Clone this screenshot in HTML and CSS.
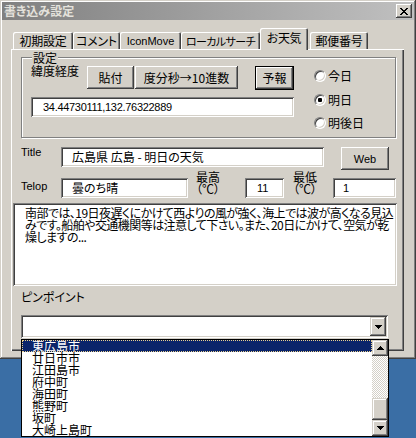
FILE: index.html
```html
<!DOCTYPE html>
<html lang="ja">
<head>
<meta charset="utf-8">
<title>書き込み設定</title>
<link rel="stylesheet" href="styles.css">
</head>
<body>
<div class="window">
  <div class="titlebar">
    <span class="title">書き込み設定</span>
    <span class="close"><svg width="8" height="7" viewBox="0 0 8 7"><path d="M0 0h2v1h-2z M6 0h2v1h-2z M1 1h2v1h-2z M5 1h2v1h-2z M2 2h4v1h-4z M3 3h2v1h-2z M2 4h4v1h-4z M1 5h2v1h-2z M5 5h2v1h-2z M0 6h2v1h-2z M6 6h2v1h-2z" fill="#000"/></svg></span>
  </div>
  <div class="client">
    <div class="tabs">
      <div class="tab t1">初期設定</div>
      <div class="tab t2">コメント</div>
      <div class="tab t3 lt">IconMove</div>
      <div class="tab t4">ローカルサーチ</div>
      <div class="tab sel">お天気</div>
      <div class="tab t6">郵便番号</div>
    </div>
    <div class="page">
      <div class="group">
        <span class="legend">設定</span>
        <div class="gleft">
          <div class="row1">
            <span class="lbl-latlon">緯度経度</span>
            <div class="btn b-paste">貼付</div>
            <div class="btn b-conv">度分秒→10進数</div>
            <div class="btn b-fc">予報</div>
          </div>
          <div class="field f-latlon"><span class="lt num">34.44730111,132.76322889</span></div>
        </div>
        <div class="radios">
          <div class="radio"><span class="rb"></span>今日</div>
          <div class="radio"><span class="rb on"></span>明日</div>
          <div class="radio r3"><span class="rb"></span>明後日</div>
        </div>
      </div>
      <div class="row-title">
        <span class="lbl lt lbl-title">Title</span>
        <div class="field f-title">広島県 広島 - 明日の天気</div>
        <div class="btn b-web lt">Web</div>
      </div>
      <div class="row-telop">
        <span class="lbl lt lbl-telop">Telop</span>
        <div class="field f-telop">曇のち晴</div>
        <span class="temp-lbl tl1">最高
（℃）</span>
        <div class="field f-hi"><span class="lt">11</span></div>
        <span class="temp-lbl tl2">最低
（℃）</span>
        <div class="field f-lo"><span class="lt">1</span></div>
      </div>
      <div class="memo">南部では、19日夜遅くにかけて西よりの風が強く、海上では波が高くなる見込
みです。船舶や交通機関等は注意して下さい。また、20日にかけて、空気が乾
燥しますの...</div>
      <div class="pin-lbl">ピンポイント</div>
      <div class="combo">
        <div class="combo-btn"><svg width="7" height="4" viewBox="0 0 7 4"><path d="M0 0h7v1h-7z M1 1h5v1h-5z M2 2h3v1h-3z M3 3h1v1h-1z" fill="#000"/></svg></div>
      </div>
    </div>
  </div>
</div>
<div class="droplist">
  <div class="items">
    <div class="item selected">東広島市</div>
    <div class="item">廿日市市</div>
    <div class="item">江田島市</div>
    <div class="item">府中町</div>
    <div class="item">海田町</div>
    <div class="item">熊野町</div>
    <div class="item">坂町</div>
    <div class="item">大崎上島町</div>
  </div>
  <div class="vscroll">
    <div class="sb-btn"><svg width="7" height="4" viewBox="0 0 7 4"><path d="M3 0h1v1h-1z M2 1h3v1h-3z M1 2h5v1h-5z M0 3h7v1h-7z" fill="#000"/></svg></div>
    <div class="sb-track"></div>
    <div class="sb-thumb"></div>
    <div class="sb-btn"><svg width="7" height="4" viewBox="0 0 7 4"><path d="M0 0h7v1h-7z M1 1h5v1h-5z M2 2h3v1h-3z M3 3h1v1h-1z" fill="#000"/></svg></div>
  </div>
</div>
</body>
</html>
```

FILE: styles.css
```css
* { box-sizing: border-box; }

html, body { margin: 0; padding: 0; }

body {
  width: 416px;
  height: 438px;
  overflow: hidden;
  position: relative;
  background: #3a6ea5;
  font-family: "Noto Sans CJK JP", sans-serif;
  font-size: 12px;
  line-height: 12px;
  font-feature-settings: "palt";
  color: #000;
}

.lt {
  font-family: "Liberation Sans", sans-serif;
  font-size: 11px;
  font-feature-settings: normal;
}

.num { letter-spacing: -0.3px; }

/* window frame */
.window {
  width: 416px;
  height: 359px;
  background: #d4d0c8;
  padding: 2px;
  box-shadow: inset -1px -1px #404040, inset 1px 1px #d4d0c8,
              inset -2px -2px #808080, inset 2px 2px #fff;
}

.titlebar {
  height: 18px;
  background: linear-gradient(90deg, #808080, #c0c0c0);
  display: flex;
  align-items: center;
  justify-content: space-between;
  padding: 0 2px 0 2px;
}

.title {
  color: #e4e2dc;
  font-weight: bold;
  font-size: 12px;
  line-height: 12px;
}

.close {
  width: 16px;
  height: 14px;
  background: #d4d0c8;
  display: flex;
  align-items: center;
  justify-content: center;
  box-shadow: inset -1px -1px #404040, inset 1px 1px #fff,
              inset -2px -2px #808080;
}
.close svg { display: block; }

.client {
  padding: 8px 0 0 9px;
}

/* tabs */
.tabs {
  display: flex;
  align-items: flex-end;
  height: 21px;
  padding-left: 2px;
}

.tab {
  height: 17px;
  padding-top: 3px;
  text-align: center;
  white-space: nowrap;
  background: #d4d0c8;
  border-radius: 2px 2px 0 0;
  letter-spacing: -0.3px;
  box-shadow: inset 1px 1px #fff, inset -1px 0 #404040, inset -2px 0 #808080;
}
.tab.lt { padding-top: 3px; line-height: 12px; letter-spacing: 0; }
.t1 { width: 60px; }
.t2 { width: 47px; }
.t3 { width: 61px; }
.t4 { width: 79px; font-size: 11px; letter-spacing: -0.6px; padding-top: 4px; line-height: 11px; }
.t6 { width: 58px; margin-left: 2px; }

.tab.sel {
  width: 48px;
  height: 22px;
  margin-bottom: -1px;
  padding-top: 4px;
  position: relative;
  z-index: 1;
}

/* page */
.page {
  width: 393px;
  height: 302px;
  padding: 8px 0 0 2px;
  box-shadow: inset 1px 1px #fff, inset -1px -1px #404040, inset -2px -2px #808080;
}

.group {
  position: relative;
  margin-left: 8px;
  width: 375px;
  height: 81px;
  border: 1px solid #808080;
  box-shadow: inset 1px 1px #fff, 1px 1px #fff;
  padding: 8px 0 0 9px;
  display: flex;
}

.legend {
  position: absolute;
  top: -6px;
  left: 10px;
  padding: 0 1px;
  background: #d4d0c8;
}

.gleft { width: 263px; }

.row1 {
  display: flex;
  align-items: flex-start;
  height: 24px;
}

.lbl-latlon {
  width: 56px;
  margin-top: -1px;
}

.btn {
  display: flex;
  align-items: center;
  justify-content: center;
  background: #d4d0c8;
  white-space: nowrap;
  box-shadow: inset -1px -1px #404040, inset 1px 1px #fff,
              inset -2px -2px #808080, inset 2px 2px #d4d0c8;
}

.b-paste { width: 47px; height: 23px; }
.b-conv { width: 103px; height: 23px; margin-left: 1px; }
.b-fc {
  width: 39px;
  height: 24px;
  margin-left: auto;
  border: 1px solid #000;
}

.field {
  background: #fff;
  display: flex;
  align-items: center;
  white-space: nowrap;
  box-shadow: inset 1px 1px #808080, inset -1px -1px #fff,
              inset 2px 2px #404040, inset -2px -2px #d4d0c8;
}

.f-latlon {
  margin-top: 7px;
  height: 20px;
  padding-left: 12px;
}

.radios {
  margin-left: 20px;
  padding-top: 4px;
  display: flex;
  flex-direction: column;
  gap: 12px;
}
.radio {
  display: flex;
  align-items: center;
  height: 12px;
  gap: 2px;
}
.radio.r3 { margin-top: -1px; }

.rb {
  width: 12px;
  height: 12px;
  border-radius: 50%;
  background: #fff;
  border: 1px solid;
  border-color: #808080 #fff #fff #808080;
  box-shadow: inset 1px 1px #404040, inset -1px -1px #d4d0c8;
  position: relative;
}
.rb.on::after {
  content: "";
  position: absolute;
  left: 3px;
  top: 3px;
  width: 4px;
  height: 4px;
  border-radius: 1px;
  background: #000;
}

/* title row */
.row-title {
  display: flex;
  align-items: flex-start;
  margin-top: 9px;
  padding-left: 8px;
  height: 23px;
}
.lbl { width: 40px; }
.lbl-title { margin-top: -1px; }

.f-title {
  width: 263px;
  height: 20px;
  padding-left: 11px;
}
.b-web {
  width: 48px;
  height: 23px;
  margin-left: 17px;
}

/* telop row */
.row-telop {
  display: flex;
  align-items: flex-start;
  margin-top: 8px;
  padding-left: 8px;
  height: 20px;
}
.lbl-telop { margin-top: 2px; }
.f-telop { width: 127px; height: 20px; padding-left: 11px; }

.temp-lbl {
  margin-top: -7px;
  line-height: 12px;
  white-space: pre;
}
.tl1 { margin-left: 8px; width: 49px; }
.tl2 { margin-left: 9px; width: 40px; }

.f-hi { width: 39px; height: 20px; padding-left: 12px; }
.f-lo { width: 63px; height: 20px; padding-left: 10px; }

/* memo */
.memo {
  margin-top: 5px;
  width: 384px;
  height: 83px;
  background: #fff;
  padding: 4px 0 0 12px;
  white-space: pre;
  letter-spacing: -0.55px;
  box-shadow: inset 1px 1px #808080, inset -1px -1px #fff,
              inset 2px 2px #404040, inset -2px -2px #d4d0c8;
}

.pin-lbl {
  margin-top: 5px;
  padding-left: 8px;
}

.combo {
  margin-top: 12px;
  margin-left: 8px;
  width: 367px;
  height: 23px;
  background: #fff;
  padding: 2px;
  display: flex;
  justify-content: flex-end;
  box-shadow: inset 1px 1px #808080, inset -1px -1px #fff,
              inset 2px 2px #404040, inset -2px -2px #d4d0c8;
}
.combo-btn, .sb-btn {
  width: 16px;
  height: 19px;
  background: #d4d0c8;
  display: flex;
  align-items: center;
  justify-content: center;
  box-shadow: inset -1px -1px #404040, inset 1px 1px #d4d0c8,
              inset -2px -2px #808080, inset 2px 2px #fff;
}
.combo-btn svg, .sb-btn svg { display: block; }

/* dropdown list (overlays window) */
.droplist {
  position: absolute;
  left: 21px;
  top: 339px;
  width: 368px;
  height: 98px;
  background: #fff;
  border: 1px solid #000;
  display: flex;
}
.items { flex: 1; }
.item {
  height: 12px;
  padding-left: 10px;
  white-space: nowrap;
}
.item.selected {
  background: #0a246a;
  color: #fff;
  outline: 1px dotted #e8d090;
  outline-offset: -1px;
}

.vscroll {
  width: 16px;
  display: flex;
  flex-direction: column;
}
.sb-btn { height: 16px; }
.sb-track {
  height: 42px;
  background: repeating-conic-gradient(#fff 0 25%, #d4d0c8 0 50%) 0 0 / 2px 2px;
}
.sb-thumb {
  height: 22px;
  background: #d4d0c8;
  box-shadow: inset -1px -1px #404040, inset 1px 1px #d4d0c8,
              inset -2px -2px #808080, inset 2px 2px #fff;
}
```
